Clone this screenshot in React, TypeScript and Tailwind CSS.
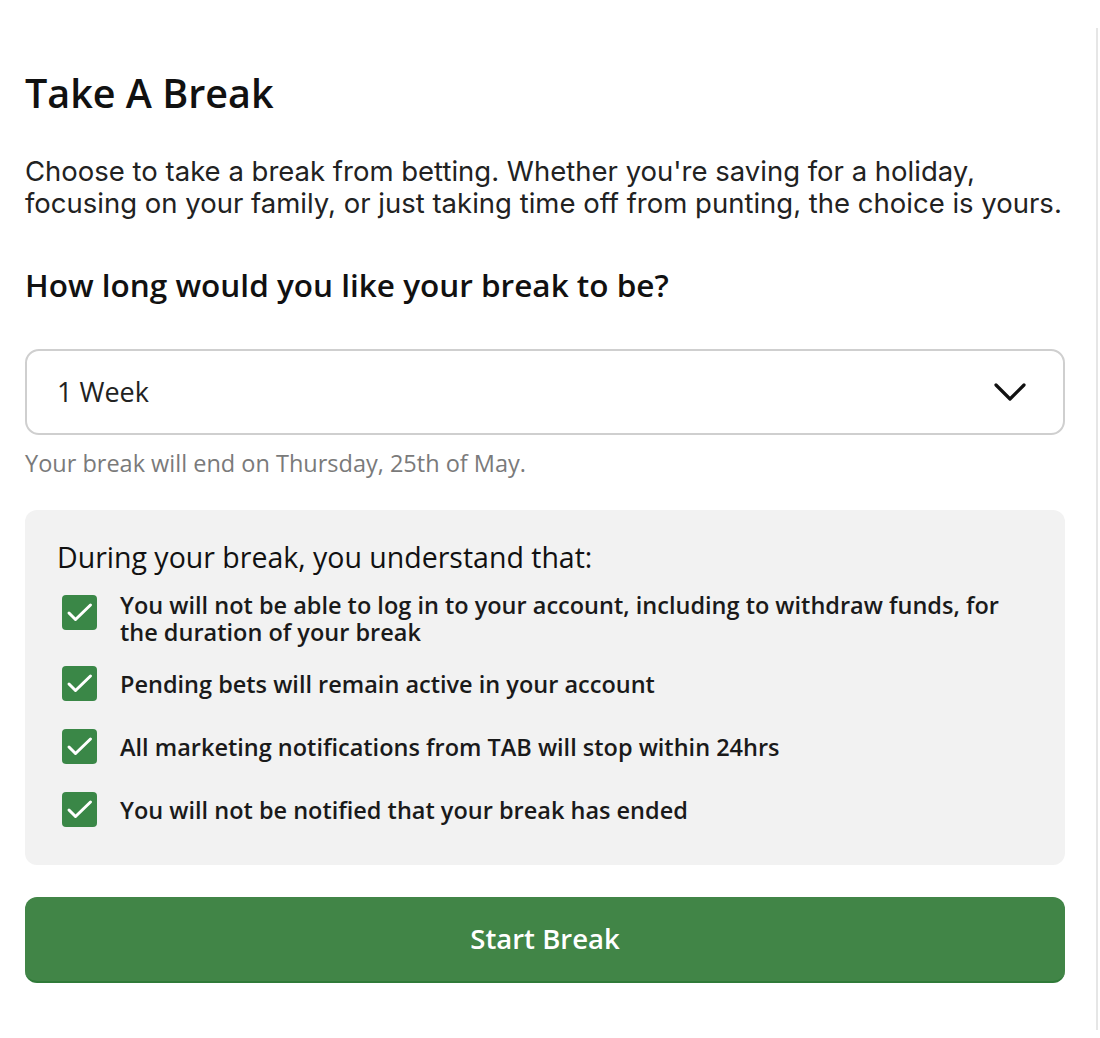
import React, { useState } from "react";

const items = [
  "You will not be able to log in to your account, including to withdraw funds, for the duration of your break",
  "Pending bets will remain active in your account",
  "All marketing notifications from TAB will stop within 24hrs",
  "You will not be notified that your break has ended",
];

const CheckIcon = () => (
  <svg viewBox="0 0 35 35" className="w-[35px] h-[35px]" fill="none" stroke="white" strokeWidth="3" strokeLinecap="round" strokeLinejoin="round">
    <path d="M7 18l6.5 6.5L28.5 10" />
  </svg>
);

const App: React.FC = () => {
  const [checked, setChecked] = useState<boolean[]>(items.map(() => true));

  return (
    <div className="min-h-screen bg-white" style={{ fontFamily: "'Open Sans', sans-serif" }}>
      <div className="w-[1098px] pt-[28px]">
        <div className="border-r-2 border-[#e6e6e6] min-h-[1002px] pl-[25px] pr-[31px]">
          <h1 className="pt-[41px] text-[39.5px] leading-[48px] font-semibold text-[#111]">Take A Break</h1>

          <p className="mt-[38px] -mr-[24px] text-[27.5px] leading-[32px] text-[#222]" style={{ fontFamily: "Inter, sans-serif" }}>
            Choose to take a break from betting. Whether you're saving for a holiday, focusing on your family, or just taking time off from punting, the choice is yours.
          </p>

          <h2 className="mt-[46px] text-[31.5px] leading-[40px] font-semibold text-[#111]">How long would you like your break to be?</h2>

          <div className="mt-[44px] h-[86px] rounded-[14px] border-2 border-[#cfcfcf] flex items-center justify-between pl-[30px] pr-[37px]">
            <span className="text-[27px] text-[#222]">1 Week</span>
            <svg viewBox="0 0 32 18" className="w-[32px] h-[18px]" fill="none" stroke="#111" strokeWidth="3.2" strokeLinecap="round" strokeLinejoin="round">
              <path d="M2 2l14 14L30 2" />
            </svg>
          </div>

          <p className="mt-[14px] text-[23.5px] leading-[28px] text-[#7a7a7a]">Your break will end on Thursday, 25th of May.</p>

          <div className="mt-[33px] h-[355px] rounded-[12px] bg-[#f2f2f2] pl-[32px] pr-[32px] pt-[29px]">
            <h3 className="text-[28.5px] leading-[36px] font-medium text-[#111]">During your break, you understand that:</h3>
            <ul className="mt-[20px] flex flex-col gap-[28px]">
              {items.map((t, i) => (
                <li key={i} className="flex items-start gap-[23px]">
                  <button
                    onClick={() => setChecked(c => c.map((v, j) => (j === i ? !v : v)))}
                    className={`ml-[5px] w-[35px] h-[35px] shrink-0 rounded-[4px] flex items-center justify-center ${checked[i] ? "bg-[#3a8747]" : "bg-white border-2 border-[#999]"}`}
                  >
                    {checked[i] && <CheckIcon />}
                  </button>
                  <span className={`text-[23.5px] leading-[26.5px] font-semibold text-[#1a1a1a] ${i === 0 ? "-mt-[3px] -mb-[7px]" : "mt-[5px]"}`}>{t}</span>
                </li>
              ))}
            </ul>
          </div>

          <button className="mt-[32px] w-full h-[86px] rounded-[12px] bg-[#418547] border-b-2 border-[#2f7a38] text-white text-[27.5px] font-semibold">
            Start Break
          </button>
        </div>
      </div>
    </div>
  );
};

export default App;
